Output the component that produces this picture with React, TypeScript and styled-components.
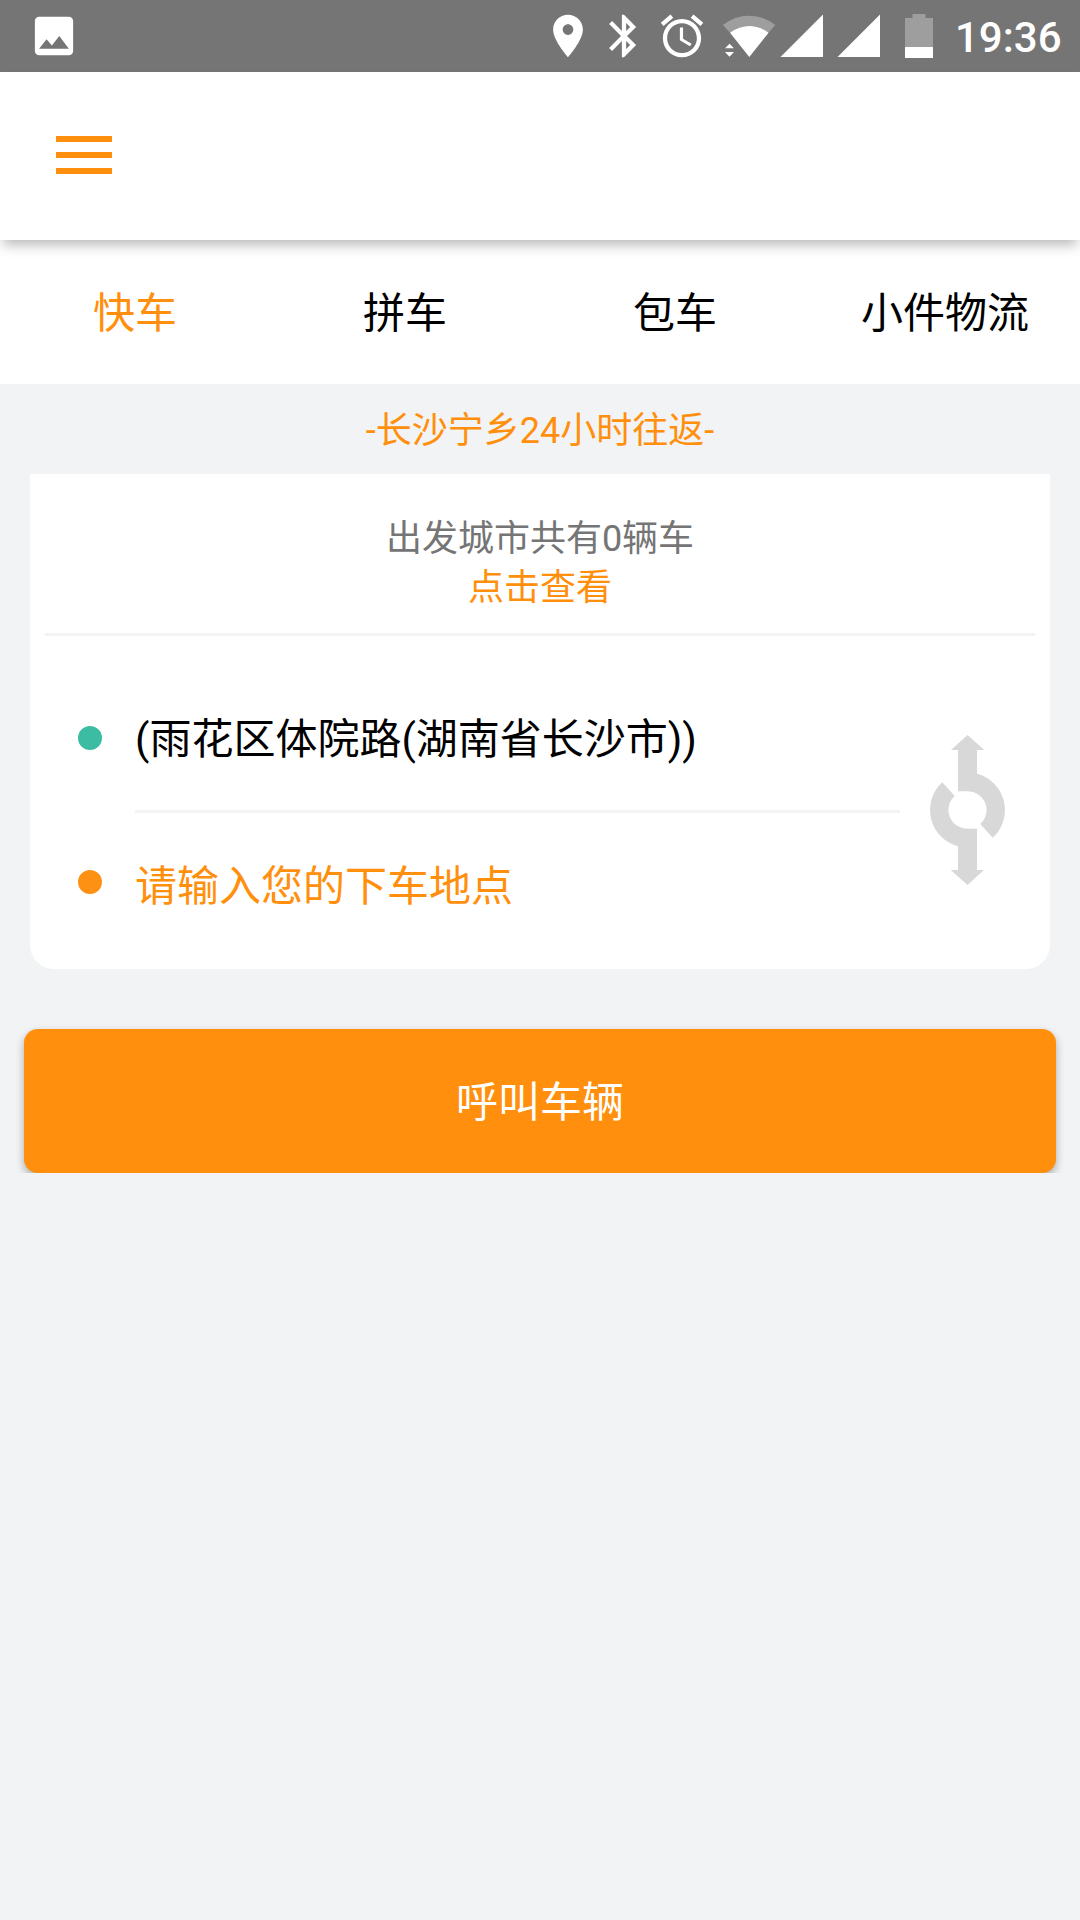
import React, { useState } from 'react';
import styled, { createGlobalStyle } from 'styled-components';

const orange = '#ff8f0c';

const GlobalStyle = createGlobalStyle`
  * { box-sizing: border-box; }
  body {
    margin: 0;
    background: #f2f3f5;
    font-family: Roboto, "Noto Sans CJK SC", sans-serif;
    color: #000;
  }
  button { font: inherit; color: inherit; border: 0; background: none; padding: 0; }
`;

const Screen = styled.div`
  display: flex;
  flex-direction: column;
  width: 1080px;
  height: 1920px;
  overflow: hidden;
  background: #f2f3f5;
`;

const StatusBar = styled.header`
  display: flex;
  align-items: center;
  height: 72px;
  flex: none;
  padding: 0 18px 0 28px;
  background: #757575;
  color: #fff;
`;

const StatusIcon = styled.svg<{ $gap?: number }>`
  display: block;
  flex: none;
  margin-left: ${(p) => p.$gap ?? 0}px;
  fill: currentColor;
`;

const Clock = styled.span`
  margin-left: 22px;
  font-size: 42px;
  line-height: 72px;
  font-weight: 500;
  white-space: nowrap;
  padding-top: 4px;
`;

const Toolbar = styled.div`
  position: relative;
  z-index: 1;
  display: flex;
  align-items: center;
  height: 168px;
  flex: none;
  padding: 0 56px;
  background: #fff;
  box-shadow: 0 8px 12px -3px rgba(0, 0, 0, 0.28);
`;

const MenuButton = styled.button`
  display: flex;
  flex-direction: column;
  gap: 10px;
  width: 56px;
  margin-top: -2px;
`;

const MenuLine = styled.span`
  height: 6px;
  background: ${orange};
`;

const Tabs = styled.nav`
  display: grid;
  grid-template-columns: repeat(4, 1fr);
  height: 144px;
  flex: none;
  background: #fff;
`;

const Tab = styled.button<{ $active: boolean }>`
  padding-top: 4px;
  font-size: 42px;
  line-height: 140px;
  text-align: center;
  color: ${(p) => (p.$active ? orange : '#000')};
`;

const Notice = styled.p`
  margin: 0;
  height: 90px;
  flex: none;
  padding-top: 2px;
  font-size: 36px;
  line-height: 90px;
  text-align: center;
  color: ${orange};
`;

const Card = styled.section`
  display: flex;
  flex-direction: column;
  height: 495px;
  flex: none;
  margin: 0 30px;
  padding: 0 15px;
  background: #fff;
  border-radius: 0 0 24px 24px;
`;

const Availability = styled.div`
  height: 162px;
  padding-top: 41px;
  border-bottom: 3px solid #f2f3f5;
  font-size: 36px;
  line-height: 49px;
  text-align: center;
`;

const CarCount = styled.div`
  color: #757575;
`;

const ViewLink = styled.div`
  color: ${orange};
`;

const Route = styled.div`
  display: flex;
  flex: 1;
`;

const Stops = styled.div`
  display: flex;
  flex-direction: column;
  width: 855px;
  padding-top: 30px;
`;

const Stop = styled.div<{ $color: string }>`
  display: flex;
  align-items: center;
  height: 144px;
  padding-left: 33px;
  font-size: 42px;
  white-space: nowrap;
  color: ${(p) => p.$color};
`;

const Dot = styled.span<{ $color: string }>`
  width: 24px;
  height: 24px;
  flex: none;
  margin-right: 33px;
  border-radius: 50%;
  background: ${(p) => p.$color};
`;

const StopText = styled.span<{ $shift: number }>`
  line-height: 60px;
  padding-top: ${(p) => p.$shift}px;
`;

const StopDivider = styled.hr`
  width: 765px;
  height: 3px;
  margin: 0 0 -3px 90px;
  border: 0;
  background: #f2f3f5;
`;

const SwapButton = styled.button`
  width: 75px;
  height: 150px;
  margin: 99px 0 0 30px;
`;

const CallArea = styled.div`
  flex: none;
  margin-top: 48px;
  padding: 12px 24px 0;
  overflow: hidden;
`;

const CallButton = styled.button`
  display: block;
  width: 100%;
  height: 144px;
  padding-top: 4px;
  border-radius: 14px;
  background: ${orange};
  color: #fff;
  font-size: 42px;
  line-height: 140px;
  text-align: center;
  box-shadow: 0 4px 8px rgba(0, 0, 0, 0.3);
`;

const tabs = ['快车', '拼车', '包车', '小件物流'];

const iconBox = '-0.235 -0.235 24.470 24.470';

const swapArm =
  'M37.5 0L54.3 15H47V38.7A37.5 37.5 0 0 1 62.7 102.7L50.3 89A18.8 18.8 0 0 0 37.5 56.2H28V15H21Z';

export default function App() {
  const [active, setActive] = useState(0);
  return (
    <>
      <GlobalStyle />
      <Screen>
        <StatusBar>
          <StatusIcon width="52" height="52" viewBox={iconBox}>
            <path d="M21 19V5c0-1.1-.9-2-2-2H5c-1.1 0-2 .9-2 2v14c0 1.1.9 2 2 2h14c1.1 0 2-.9 2-2zM8.5 13.5l2.5 3.01L14.5 12l4.5 6H5l3.5-4.5z" />
          </StatusIcon>
          <StatusIcon $gap={462} width="52" height="52" viewBox={iconBox}>
            <path d="M12 2C8.13 2 5 5.13 5 9c0 5.25 7 13 7 13s7-7.75 7-13c0-3.87-3.13-7-7-7zm0 9.5c-1.38 0-2.5-1.12-2.5-2.5s1.12-2.5 2.5-2.5 2.5 1.12 2.5 2.5-1.12 2.5-2.5 2.5z" />
          </StatusIcon>
          <StatusIcon $gap={4} width="52" height="52" viewBox={iconBox}>
            <path d="M17.71 7.71L12 2h-1v7.59L6.41 5 5 6.41 10.59 12 5 17.59 6.41 19 11 14.41V22h1l5.71-5.71-4.3-4.29 4.3-4.29zM13 5.83l1.88 1.88L13 9.59V5.83zm1.88 10.46L13 18.17v-3.76l1.88 1.88z" />
          </StatusIcon>
          <StatusIcon $gap={6} width="52" height="52" viewBox={iconBox}>
            <path d="M22 5.72l-4.6-3.86-1.29 1.53 4.6 3.86L22 5.72zM7.88 3.39L6.6 1.86 2 5.71l1.29 1.53 4.59-3.85zM12.5 8H11v6l4.75 2.85.75-1.23-4-2.37V8zM12 4c-4.97 0-9 4.03-9 9s4.02 9 9 9c4.97 0 9-4.03 9-9s-4.03-9-9-9zm0 16c-3.87 0-7-3.13-7-7s3.13-7 7-7 7 3.13 7 7-3.13 7-7 7z" />
          </StatusIcon>
          <StatusIcon $gap={15} width="53" height="72" viewBox="0 0 53 72">
            <path opacity=".3" d="M0 25Q11.500 15.700 26.300 15.700Q41 15.700 52.300 25L45.600 32.700Q36.500 26 26.300 26Q16 26 7 32.700Z" />
            <path d="M26.300 57L7 32.700Q16 26 26.300 26Q36.500 26 45.600 32.700Z" />
            <path d="M2 48.300L6.500 43.800L11 48.300ZM2 52L6.500 56.700L11 52Z" />
          </StatusIcon>
          <StatusIcon $gap={4} width="43" height="72" viewBox="0 0 43 72">
            <path d="M.5 57H43V14.500Z" />
          </StatusIcon>
          <StatusIcon $gap={14} width="43" height="72" viewBox="0 0 43 72">
            <path d="M.5 57H43V14.500Z" />
          </StatusIcon>
          <StatusIcon $gap={25} width="28" height="72" viewBox="0 0 28 72">
            <path opacity=".3" d="M7.500 14H20.500V18H28V47H0V18H7.500Z" />
            <path d="M0 47H28V58H0Z" />
          </StatusIcon>
          <Clock>19:36</Clock>
        </StatusBar>

        <Toolbar>
          <MenuButton aria-label="菜单">
            <MenuLine />
            <MenuLine />
            <MenuLine />
          </MenuButton>
        </Toolbar>

        <Tabs>
          {tabs.map((label, i) => (
            <Tab key={label} $active={i === active} onClick={() => setActive(i)}>
              {label}
            </Tab>
          ))}
        </Tabs>

        <Notice>-长沙宁乡24小时往返-</Notice>

        <Card>
          <Availability>
            <CarCount>出发城市共有0辆车</CarCount>
            <ViewLink>点击查看</ViewLink>
          </Availability>
          <Route>
            <Stops>
              <Stop $color="#000">
                <Dot $color="#3cbca3" />
                <StopText $shift={4}>(雨花区体院路(湖南省长沙市))</StopText>
              </Stop>
              <StopDivider />
              <Stop $color={orange}>
                <Dot $color="#fc9114" />
                <StopText $shift={10}>请输入您的下车地点</StopText>
              </Stop>
            </Stops>
            <SwapButton aria-label="交换">
              <svg width="75" height="150" viewBox="0 0 75 150" fill="#d8d8d8">
                <path d={swapArm} />
                <path d={swapArm} transform="rotate(180 37.500 75)" />
              </svg>
            </SwapButton>
          </Route>
        </Card>

        <CallArea>
          <CallButton>呼叫车辆</CallButton>
        </CallArea>
      </Screen>
    </>
  );
}
